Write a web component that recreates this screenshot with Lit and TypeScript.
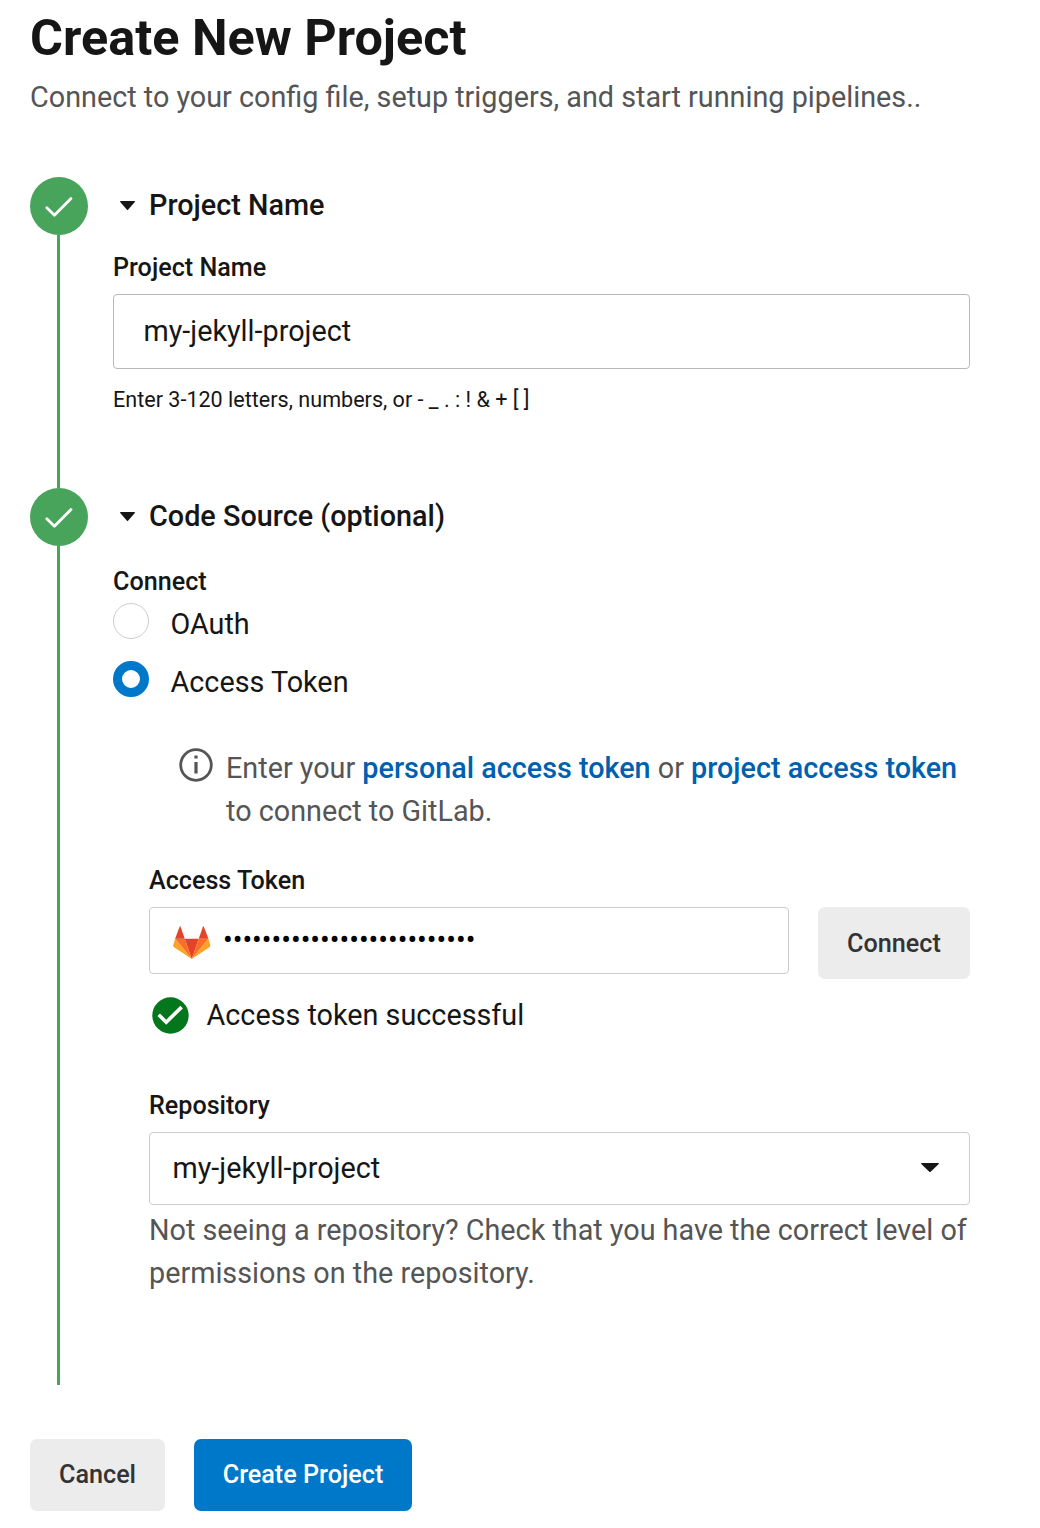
import { LitElement, html, css, svg } from "lit";
import { customElement, property } from "lit/decorators.js";

const caret = (w: number, h: number) => html`<svg class="caret" width=${w} height=${h} viewBox="0 0 16 9" preserveAspectRatio="none">
  <path d="M0.5 0H15.5L16 0.8L8.6 8.7Q8 9.2 7.4 8.7L0 0.8Z" fill="#161616"></path>
</svg>`;

const tanuki = svg`
  <path d="M19 33.5L26.1 13H11.9Z" fill="#e24329"></path>
  <path d="M19 33.5L11.9 13H2.1Z" fill="#fc6d26"></path>
  <path d="M2.1 13L0.2 19.4Q-0.2 20.6 0.8 21.3L19 33.5Z" fill="#fca326"></path>
  <path d="M2.1 13H11.9L7.6 0.6Q7.2 -0.2 6.8 0.6Z" fill="#e24329"></path>
  <path d="M19 33.5L26.1 13H35.9Z" fill="#fc6d26"></path>
  <path d="M35.9 13L37.8 19.4Q38.2 20.6 37.2 21.3L19 33.5Z" fill="#fca326"></path>
  <path d="M35.9 13H26.1L30.4 0.6Q30.8 -0.2 31.2 0.6Z" fill="#e24329"></path>`;

@customElement("setup-step")
class SetupStep extends LitElement {
  @property() heading = "";

  static styles = css`
    :host { display: flex; }
    .rail { display: flex; flex-direction: column; align-items: center; width: 58px; margin-right: 25px; flex: none; }
    .badge { display: block; width: 58px; height: 58px; flex: none; }
    .line { flex: 1; width: 3px; margin-left: -1px; background: #48a35b; }
    .body { flex: 1; min-width: 0; }
    .head { display: flex; align-items: center; height: 57px; padding-left: 7px; }
    .caret { display: block; margin: 0 14px 0 0; }
    h2 { margin: 0 0 2px; font-size: 28.8px; font-weight: 500; line-height: 44px; }
  `;

  render() {
    return html`
      <div class="rail">
        <svg class="badge" viewBox="0 0 58 58">
          <circle cx="29" cy="29" r="29" fill="#48a35b"></circle>
          <path d="M16.8 30.8L24.4 38.2L41 21.4" fill="none" stroke="#fff" stroke-width="2.8" stroke-linecap="round" stroke-linejoin="round"></path>
        </svg>
        <div class="line"></div>
      </div>
      <div class="body">
        <div class="head">${caret(15, 9)}<h2>${this.heading}</h2></div>
        <slot></slot>
      </div>`;
  }
}

@customElement("app-root")
class AppRoot extends LitElement {
  static styles = css`
    :host {
      display: block; box-sizing: border-box; height: 1528px; padding: 8px 70px 0 30px;
      background: #fff; color: #161616; font-family: Roboto, sans-serif; font-size: 28.78px; line-height: 43px;
    }
    * { box-sizing: border-box; }
    h1 { margin: 0; font-size: 50.4px; line-height: 60px; font-weight: 700; white-space: nowrap; }
    .lead { margin: 7px 0 58px; line-height: 44px; color: #555; white-space: nowrap; }
    .name { height: 311px; }
    .source { height: 897px; }
    .label { font-size: 25.15px; font-weight: 500; line-height: 30px; }
    .name .label { margin-top: 19px; }
    .field { display: flex; align-items: center; border: 1px solid #ccc; border-radius: 4px; background: #fff; }
    .project { height: 75px; margin-top: 11px; padding: 0 0 0 29.5px; border-color: #b8b8b8; }
    .hint { margin-top: 16px; font-size: 21.57px; line-height: 30px; }
    .connect { margin-top: 22px; }
    .radio { display: flex; align-items: flex-start; height: 58px; margin-top: 6px; }
    .radio + .radio { margin-top: 0; }
    .dot { width: 36px; height: 36px; margin-right: 21.5px; border: 1px solid #ccc; border-radius: 50%; }
    .dot.on { border: 9px solid #0078ca; }
    .nested { padding-left: 36px; }
    .info { display: flex; margin-top: 28px; padding-left: 30px; color: #555; white-space: nowrap; }
    .info svg { display: block; flex: none; margin: 1px 13px 0 0; }
    a { color: #0060b0; font-weight: 500; }
    .token-label { margin-top: 33px; }
    .row { display: flex; align-items: flex-start; margin-top: 11px; gap: 29px; }
    .token { flex: 1; height: 67px; padding-left: 23px; }
    .token svg { display: block; margin: 5px 12.5px 0 0; }
    .mask { color: #000; }
    .btn {
      display: flex; align-items: center; justify-content: center; height: 72px; border-radius: 7px;
      font-size: 25.2px; font-weight: 500; background: #ececec; color: #333;
    }
    .btn.primary { background: #0078ca; color: #fff; }
    .row .btn { width: 152px; }
    .ok { display: flex; align-items: center; height: 43px; margin-top: 15px; padding-left: 3px; }
    .ok svg { display: block; margin-right: 17.5px; }
    .repo-label { margin-top: 54px; }
    .select { height: 73px; margin-top: 11px; padding: 0 30px 0 22.5px; justify-content: space-between; }
    .select .caret { margin-top: -2px; }
    .note { margin: 4px 0 0; color: #555; white-space: nowrap; }
    .actions { display: flex; gap: 29px; margin-top: 54px; }
    .actions .btn { padding-bottom: 2px; }
    .cancel { width: 135px; }
    .create { width: 218px; }
  `;

  render() {
    return html`
      <h1>Create New Project</h1>
      <p class="lead">Connect to your config file, setup triggers, and start running pipelines..</p>

      <setup-step class="name" heading="Project Name">
        <div class="label">Project Name</div>
        <div class="field project">my-jekyll-project</div>
        <div class="hint">Enter 3-120 letters, numbers, or - _ . : ! &amp; + [ ]</div>
      </setup-step>

      <setup-step class="source" heading="Code Source (optional)">
        <div class="label connect">Connect</div>
        <div class="radio"><span class="dot"></span><span>OAuth</span></div>
        <div class="radio"><span class="dot on"></span><span>Access Token</span></div>
        <div class="nested">
          <div class="info">
            <svg width="34" height="34" viewBox="0 0 34 34">
              <circle cx="17" cy="17" r="15.3" fill="none" stroke="#555" stroke-width="2.8"></circle>
              <path d="M17 14V25.6M17 7.5V10.4" stroke="#555" stroke-width="3.2"></path>
            </svg>
            <div>Enter your <a>personal access token</a> or <a>project access token</a><br>to connect to GitLab.</div>
          </div>
          <div class="label token-label">Access Token</div>
          <div class="row">
            <div class="field token">
              <svg width="37.5" height="33.5" viewBox="0 0 38 34">${tanuki}</svg>
              <span class="mask">${"•".repeat(26)}</span>
            </div>
            <div class="btn">Connect</div>
          </div>
          <div class="ok">
            <svg width="37" height="37" viewBox="0 0 37 37">
              <circle cx="18.5" cy="18.5" r="18.2" fill="#04761c"></circle>
              <path d="M6.7 17.8L14.2 25.2L29.6 10.1" fill="none" stroke="#fff" stroke-width="3.6"></path>
            </svg>
            <span>Access token successful</span>
          </div>
          <div class="label repo-label">Repository</div>
          <div class="field select"><span>my-jekyll-project</span>${caret(18, 9)}</div>
          <p class="note">Not seeing a repository? Check that you have the correct level of<br>permissions on the repository.</p>
        </div>
      </setup-step>

      <div class="actions">
        <div class="btn cancel">Cancel</div>
        <div class="btn primary create">Create Project</div>
      </div>`;
  }
}
